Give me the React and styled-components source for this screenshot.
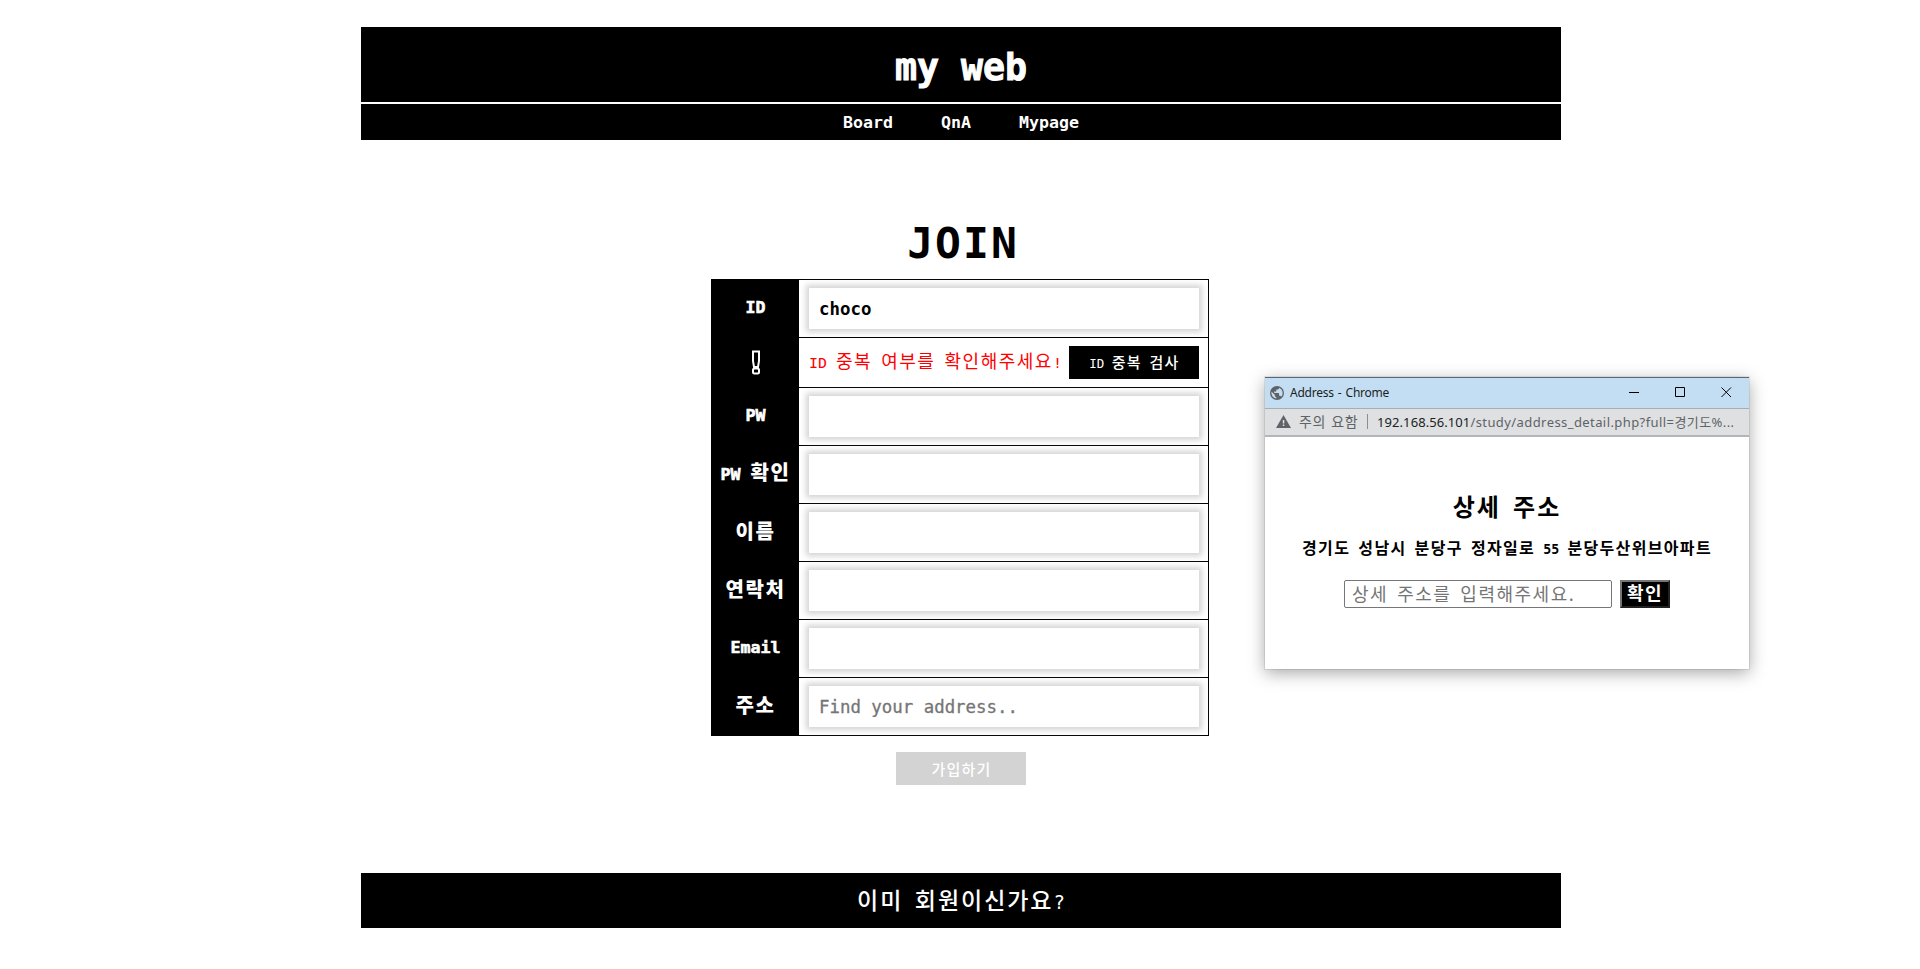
import styled, { createGlobalStyle } from "styled-components";

const GlobalStyle = createGlobalStyle`
  * {
    box-sizing: border-box;
  }
  body {
    margin: 0;
    background: white;
    font-family: "DejaVu Sans Mono", "Noto Sans CJK KR", monospace;
  }
`;

// $em is the width of one hangul letter, latin letters take half of it
const Ko = styled.span`
  padding-bottom: ${(props) => props.$lift || 0}px;
  font-family: "Noto Sans CJK KR", sans-serif;
  font-size: ${(props) => props.$em}px;
  letter-spacing: ${(props) => props.$em * 0.084}px;
  word-spacing: ${(props) => props.$em * 0.196}px;
  line-height: 1;
  white-space: pre;
`;

const En = styled.span`
  font-family: "DejaVu Sans Mono", monospace;
  font-size: ${(props) => props.$em * 0.83}px;
  letter-spacing: 0;
  word-spacing: 0;
  line-height: 1;
  white-space: pre;
`;

const Page = styled.div`
  display: flex;
  width: 1920px;
  height: 969px;
  padding: 27px 0 0 361px;
  overflow: hidden;
`;

const Main = styled.div`
  display: flex;
  flex-direction: column;
  align-items: center;
  width: 1200px;
  flex: none;
`;

const Header = styled.header`
  display: flex;
  align-items: center;
  justify-content: center;
  width: 100%;
  height: 75px;
  padding-top: 8px;
  background: black;
  color: white;
  font-weight: bold;
  -webkit-text-stroke: 1px white;
`;

const Nav = styled.nav`
  display: flex;
  align-items: center;
  justify-content: center;
  gap: 48px;
  width: 100%;
  height: 36px;
  margin-top: 2px;
  padding-top: 2px;
  background: black;
  color: white;
  font-weight: bold;
`;

const JoinTitle = styled.h1`
  height: 139px;
  margin: 0;
  padding: 82px 0 0 4px;
  font-size: 43px;
  line-height: 1;
  font-weight: bold;
  letter-spacing: 2px;
`;

const Table = styled.div`
  width: 498px;
  margin-right: 2px;
  border: 1px solid black;
  border-top: none;
`;

const Row = styled.div`
  display: flex;
  height: ${(props) => props.$height || 58}px;
`;

const Label = styled.div`
  display: flex;
  align-items: center;
  justify-content: center;
  width: 87px;
  padding-top: 1px;
  background: black;
  color: white;
  font-weight: 900;
  ${En} {
    -webkit-text-stroke: 0.6px white;
  }
`;

const Cell = styled.div`
  display: flex;
  flex: 1;
  align-items: center;
  justify-content: space-between;
  padding: 0 9px 0 10px;
  border-top: 1px solid black;
`;

const Input = styled.input`
  width: 390px;
  height: 41px;
  padding: 0 10px;
  border: none;
  outline: none;
  box-shadow: 0 0 6px 3px lightgray;
  font-family: "DejaVu Sans Mono", monospace;
  font-size: 17.4px;
  font-weight: bold;
  &::placeholder {
    color: #757575;
    font-weight: normal;
    -webkit-text-stroke: 0.3px #757575;
  }
`;

const Warning = styled.div`
  padding-bottom: 2px;
  color: red;
`;

const Button = styled.button`
  display: flex;
  align-items: center;
  justify-content: center;
  width: 130px;
  height: 33px;
  padding: 0 0 1px 1px;
  border: none;
  background: ${(props) => (props.disabled ? "lightgray" : "black")};
  color: white;
  font-weight: 500;
`;

const ButtonLine = styled.div`
  margin-top: 16px;
`;

const Footer = styled.footer`
  display: flex;
  align-items: center;
  justify-content: center;
  width: 100%;
  height: 55px;
  margin-top: 88px;
  padding-bottom: 1px;
  background: black;
  color: white;
  font-weight: 500;
`;

const Popup = styled.div`
  position: absolute;
  left: 1265px;
  top: 377px;
  width: 484px;
  height: 292px;
  background: white;
  border-top: 1px solid #5c6670;
  box-shadow: 0 0 0 1px rgba(0, 0, 0, 0.08), 0 4px 16px rgba(0, 0, 0, 0.35);
`;

const TitleBar = styled.div`
  display: flex;
  align-items: center;
  height: 31px;
  padding: 0 0 1px 5px;
  background: #c3ddf2;
  border-bottom: 1px solid #a8adb1;
  font-family: "Noto Sans", sans-serif;
  font-size: 12px;
  color: #1b1f23;
`;

const WindowTitle = styled.span`
  flex: 1;
  margin-left: 6px;
  letter-spacing: -0.25px;
  word-spacing: 1.3px;
`;

const WindowButtons = styled.svg`
  margin-right: 17px;
`;

const AddressBar = styled.div`
  display: flex;
  align-items: center;
  height: 28px;
  padding: 0 0 1px 11px;
  background: #dee0e1;
  border-bottom: 2px solid #b4b5b6;
  font-family: "Noto Sans", "Noto Sans CJK KR", sans-serif;
  font-size: 13px;
  line-height: 18px;
  color: #5f6368;
  white-space: pre;
`;

const Security = styled.span`
  width: 63px;
  margin-left: 8px;
  font-size: 14px;
  letter-spacing: 0.6px;
  word-spacing: 1px;
`;

const Divider = styled.span`
  width: 1px;
  height: 15px;
  margin: 0 9px 0 5px;
  background: #8c8f92;
`;

const Host = styled.span`
  letter-spacing: 0.08px;
  color: #202124;
`;

const Url = styled.span`
  letter-spacing: 0.42px;
`;

const PopupBody = styled.div`
  display: flex;
  flex-direction: column;
  align-items: center;
  padding-top: 57px;
`;

const PopupTitle = styled.div`
  height: 26px;
  line-height: 26px;
  font-weight: bold;
`;

const PopupAddress = styled.div`
  height: 20px;
  margin-top: 19px;
  line-height: 20px;
  font-weight: bold;
`;

const PopupForm = styled.div`
  display: flex;
  gap: 8px;
  margin-top: 21px;
`;

const DetailInput = styled.input`
  width: 268px;
  height: 28px;
  padding: 0 7px 2px;
  border: 1px solid #767676;
  border-radius: 2px;
  outline: none;
  font-family: "Noto Sans CJK KR", sans-serif;
  font-size: 18px;
  letter-spacing: 1.5px;
  word-spacing: 3.5px;
  &::placeholder {
    color: #757575;
  }
`;

const ConfirmButton = styled.button`
  width: 50px;
  height: 28px;
  padding: 0 0 2px;
  border: 2px outset #767676;
  background: black;
  color: white;
  font-weight: bold;
  line-height: 1;
`;

const BangIcon = () => (
  <svg width="10" height="25" viewBox="0 0 10 25" fill="none" stroke="white" strokeWidth="2">
    <path d="M2 1.5h6V11L7 17H3L2 11z" />
    <rect x="2" y="18.500" width="6" height="5" rx="1.500" />
  </svg>
);

const GlobeIcon = () => (
  <svg width="14" height="14" viewBox="0 0 24 24">
    <path
      fill="#5f6368"
      d="M12 0a12 12 0 1 0 0 24 12 12 0 0 0 0-24zm-1.2 21.5A9.6 9.6 0 0 1 2.7 9.9l5.7 5.7v1.2c0 1.3 1.1 2.4 2.4 2.4zm8.3-3a2.4 2.4 0 0 0-2.3-1.7h-1.2v-3.6c0-.7-.5-1.2-1.2-1.2H7.2V9.600h2.400c.7 0 1.200-.5 1.200-1.200V6h2.400c1.300 0 2.400-1.100 2.400-2.400v-.5a9.600 9.600 0 0 1 3.500 15.400z"
    />
  </svg>
);

const WarnIcon = () => (
  <svg width="15" height="13" viewBox="0 0 15 13">
    <path d="M7.500 0 15 13H0z" fill="#5f6368" />
    <path d="M6.800 5h1.500v3.500H6.800zM6.800 9.500h1.500V11H6.800z" fill="#dee0e1" />
  </svg>
);

const rows = [
  { label: <En $em={20}>PW</En> },
  {
    label: (
      <Ko $em={20} $lift={3}>
        <En $em={20}>PW </En>확인
      </Ko>
    ),
  },
  { label: <Ko $em={20} $lift={3}>이름</Ko> },
  { label: <Ko $em={20} $lift={3}>연락처</Ko> },
  { label: <En $em={20}>Email</En> },
  {
    label: <Ko $em={20} $lift={3}>주소</Ko>,
    placeholder: "Find your address..",
  },
];

const AddressPopup = () => (
  <Popup>
    <TitleBar>
      <GlobeIcon />
      <WindowTitle>Address - Chrome</WindowTitle>
      <WindowButtons width="103" height="11" viewBox="0 0 103 11" fill="none" stroke="black">
        <path d="M0 5.500h10M46.500.500h9v9h-9zM92.500.500l9.500 9.500M102 .500 92.500 10" />
      </WindowButtons>
    </TitleBar>
    <AddressBar>
      <WarnIcon />
      <Security>주의 요함</Security>
      <Divider />
      <Host>192.168.56.101</Host>
      <Url>/study/address_detail.php?full=경기도%...</Url>
    </AddressBar>
    <PopupBody>
      <PopupTitle>
        <Ko $em={24}>상세 주소</Ko>
      </PopupTitle>
      <PopupAddress>
        <Ko $em={16}>
          경기도 성남시 분당구 정자일로 <En $em={16}>55</En> 분당두산위브아파트
        </Ko>
      </PopupAddress>
      <PopupForm>
        <DetailInput placeholder="상세 주소를 입력해주세요." />
        <ConfirmButton>
          <Ko $em={18}>확인</Ko>
        </ConfirmButton>
      </PopupForm>
    </PopupBody>
  </Popup>
);

const App = () => {
  return (
    <>
      <GlobalStyle />
      <Page>
        <Main>
          <Header>
            <En $em={44}>my web</En>
          </Header>
          <Nav>
            <En $em={20}>Board</En>
            <En $em={20}>QnA</En>
            <En $em={20}>Mypage</En>
          </Nav>
          <JoinTitle>JOIN</JoinTitle>
          <Table>
            <Row>
              <Label>
                <En $em={20}>ID</En>
              </Label>
              <Cell>
                <Input defaultValue="choco" />
              </Cell>
            </Row>
            <Row $height={50}>
              <Label>
                <BangIcon />
              </Label>
              <Cell>
                <Warning>
                  <Ko $em={18}>
                    <En $em={18}>ID </En>중복 여부를 확인해주세요<En $em={18}>!</En>
                  </Ko>
                </Warning>
                <Button>
                  <Ko $em={15}>
                    <En $em={15}>ID </En>중복 검사
                  </Ko>
                </Button>
              </Cell>
            </Row>
            {rows.map((row, index) => (
              <Row key={index}>
                <Label>{row.label}</Label>
                <Cell>
                  <Input placeholder={row.placeholder} />
                </Cell>
              </Row>
            ))}
          </Table>
          <ButtonLine>
            <Button disabled>
              <Ko $em={15}>가입하기</Ko>
            </Button>
          </ButtonLine>
          <Footer>
            <Ko $em={23}>
              이미 회원이신가요<En $em={23}>?</En>
            </Ko>
          </Footer>
        </Main>
        <AddressPopup />
      </Page>
    </>
  );
};

export default App;
